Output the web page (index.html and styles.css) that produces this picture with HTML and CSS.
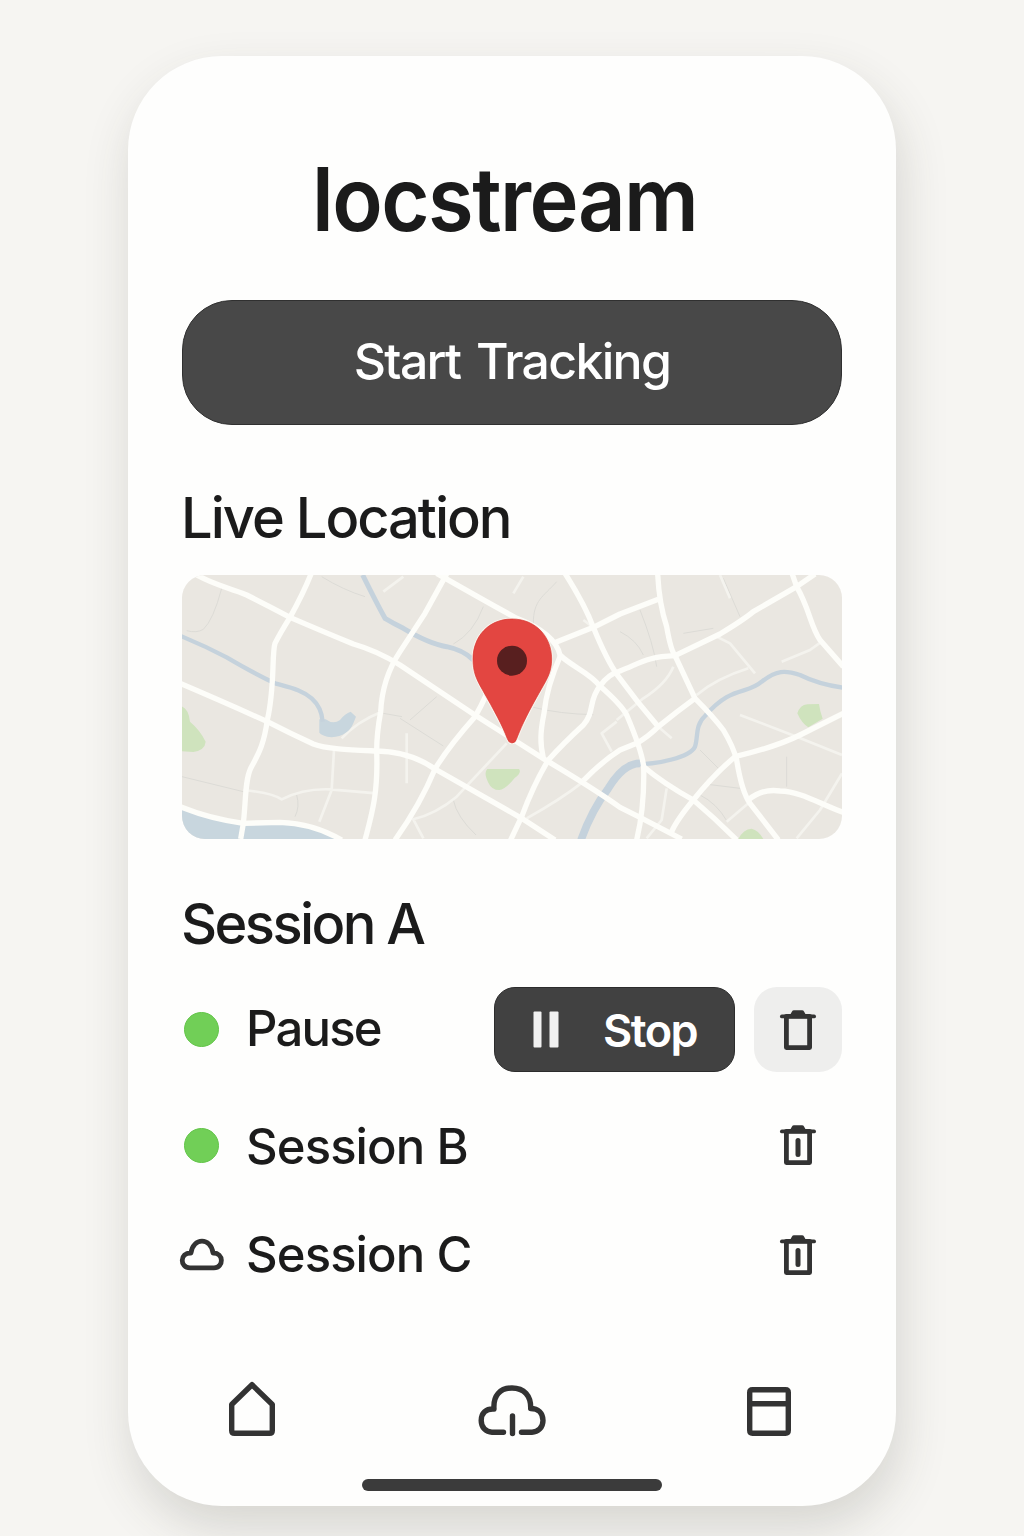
FILE: index.html
```html
<!DOCTYPE html>
<html lang="en">
<head>
<meta charset="utf-8">
<title>locstream</title>
<link rel="stylesheet" href="styles.css">
</head>
<body>
<main class="phone">
  <h1 class="brand"><span>locstream</span></h1>
  <button class="start"><span>Start Tracking</span></button>

  <h2 class="heading live"><span>Live Location</span></h2>
  <div class="map">
    <svg viewBox="6 15 1980 792" preserveAspectRatio="none">
      <g class="park">
        <path d="M0 408 Q25 412 30 455 Q60 480 77 515 Q75 540 40 546 L0 543Z"/>
        <path d="M922 597 H1017 Q1026 608 1004 624 Q975 660 958 660 Q935 660 925 638 Q910 608 922 597Z"/>
        <path d="M1852 430 Q1860 405 1882 403 L1917 402 Q1920 425 1928 446 L1885 472 Q1865 460 1852 430Z"/>
        <path d="M1675 807 Q1690 777 1715 776 Q1735 780 1750 807Z"/>
      </g>
      <g class="lane">
        <path d="M125 55 Q100 150 70 178 Q50 190 20 182M425 20 Q490 60 555 80M6 620 L190 665M350 675 Q360 710 345 740M666 440 L610 430M1130 35 C1090 80 1060 90 1060 160M910 110 Q880 190 820 222M660 445 L790 528M690 450 L770 380M820 690 Q830 740 888 795M1060 412 Q1140 432 1240 434M1380 120 Q1420 220 1430 290M1320 185 Q1370 210 1390 255M1510 190 L1600 175M1630 25 L1680 140M1560 540 L1620 600M1575 642 L1680 655M1560 675 Q1610 700 1640 752M1820 560 V650"/>
      </g>
      <g class="alley">
        <path d="M190 660 Q275 668 305 688 Q370 655 450 658 L590 670M462 540 L455 660 L418 755M485 505 Q530 455 605 425M610 65 L670 20M1030 20 L1000 70M680 490 V640M980 520 L830 680 Q770 730 700 748 L730 805M1040 745 Q1140 690 1210 635M1310 450 L1390 385 Q1460 340 1480 290M1310 455 L1265 490 L1295 545M1435 470 L1475 505M1550 375 Q1610 325 1705 295M1610 200 L1650 220 L1725 310M1620 15 L1650 85M1805 275 L1890 240 L1925 215M1680 435 L1850 500 L1986 555M1986 610 L1920 720 L1850 805M1705 700 L1640 755M1460 655 L1445 750 L1400 805M1210 150 L1240 172"/>
      </g>
      <path class="water-fill" d="M0 715 Q80 745 190 760 L330 760 Q410 775 470 807 L0 807Z"/>
      <path class="water-fill" d="M418 448 L437 448 Q460 465 480 450 Q495 430 512 425 L528 440 L520 460 Q505 498 455 502 Q425 498 418 488Z"/>
      <g class="river">
        <path d="M0 197 Q75 228 140 262 Q225 312 285 340 C340 355 365 360 395 385 Q425 412 428 455"/>
        <path stroke-width="15" d="M548 15 Q590 100 615 145 Q640 160 670 175 C720 205 770 225 800 230 Q850 240 880 270"/>
        <path stroke-width="23" d="M1203 810 Q1235 720 1285 655 Q1330 580 1380 580"/>
        <path stroke-width="13" d="M1345 583 C1440 585 1530 560 1545 530 C1555 500 1545 465 1575 438 C1655 345 1700 375 1745 335 C1790 300 1815 300 1860 315 C1890 330 1930 345 1990 353"/>
      </g>
      <g class="road">
        <path d="M50 15 C110 48 145 52 200 75 Q260 105 330 142 Q430 185 520 222 Q590 242 660 285 L880 432 L1100 572 Q1240 655 1320 712 L1380 742 L1505 807"/>
        <path d="M393 12 Q370 70 330 142 Q300 190 285 220 C275 250 285 350 262 450 C253 515 240 545 212 595 C195 630 198 690 190 760 L182 807"/>
        <path d="M0 340 Q145 402 262 455 Q330 490 400 522 C440 538 520 540 590 543 Q690 545 765 597 L1025 745 L1125 810"/>
        <path d="M0 710 Q90 747 190 760 L300 757 Q400 760 485 810"/>
        <path d="M800 12 L735 130 L660 245 C620 305 605 365 602 425 Q590 490 590 543 C595 670 575 735 555 810"/>
        <path d="M645 810 Q720 705 765 597 Q805 530 885 440 Q920 380 940 320"/>
        <path d="M770 10 Q910 90 1010 145 Q1125 190 1140 255 C1175 290 1225 305 1260 348 Q1325 405 1340 435 Q1385 540 1391 590 Q1394 710 1370 810"/>
        <path d="M1155 10 Q1215 105 1240 172 Q1280 270 1312 315 Q1370 395 1435 470"/>
        <path d="M1120 220 L1240 172 L1320 132 L1437 87"/>
        <path d="M1260 348 Q1285 312 1320 303 C1380 280 1400 260 1485 257 L1620 192 Q1690 150 1720 125 L1850 50 L1905 12"/>
        <path d="M1260 348 C1225 390 1245 425 1210 465 Q1150 520 1105 570 Q1060 645 1025 740 L992 810"/>
        <path d="M1142 255 Q1100 350 1092 430 C1080 490 1080 520 1090 565"/>
        <path d="M1433 10 Q1437 100 1460 170 Q1472 240 1485 257 L1545 385 Q1600 440 1630 480 Q1660 530 1670 570 Q1685 665 1710 700 L1795 810"/>
        <path d="M1210 632 Q1265 575 1320 540 L1370 520 Q1405 500 1435 470 Q1490 425 1545 385"/>
        <path d="M1391 590 Q1450 640 1540 690 Q1605 745 1670 810"/>
        <path d="M1475 785 Q1490 750 1540 690 Q1600 615 1665 560 Q1790 530 1860 495 L1990 430"/>
        <path d="M1705 690 Q1745 655 1800 663 C1865 665 1915 700 1990 727"/>
        <path d="M1836 10 L1850 50 C1890 120 1890 165 1920 210 L1990 290"/>
      </g>
      <path class="pin-halo" d="M996 147 C925 147 879 200 879 267 C879 305 888 326 907 359 C945 426 966 464 982 506 Q986 519 996 519 Q1006 519 1010 506 C1028 460 1045 426 1083 359 C1102 326 1115 305 1115 267 C1115 200 1067 147 996 147Z"/>
      <path class="pin" d="M996 147 C925 147 879 200 879 267 C879 305 888 326 907 359 C945 426 966 464 982 506 Q986 519 996 519 Q1006 519 1010 506 C1028 460 1045 426 1083 359 C1102 326 1115 305 1115 267 C1115 200 1067 147 996 147Z"/>
      <circle class="pin-eye" cx="996" cy="272" r="45"/>
    </svg>
  </div>

  <h2 class="heading session-title"><span>Session A</span></h2>
  <ul class="sessions">
    <li class="row active">
      <span class="status"><i class="dot"></i></span>
      <span class="name pause">Pause</span>
      <button class="stop">
        <svg class="bars" width="26" height="37" viewBox="0 0 26 37"><rect x="0.5" y="0.5" width="8" height="36" rx="1"/><rect x="16.5" y="0.5" width="9" height="36" rx="1"/></svg>
        <span>Stop</span>
      </button>
      <button class="trash boxed">
        <svg class="icon" width="36" height="40" viewBox="0 0 36 40"><path class="solid" d="M10 5 L12 1.5 Q12.500 .2 14 .2 H22 Q23.500 .2 24 1.500 L26 5Z"/><path class="line" d="M1.900 6.400 H34.100"/><path class="body" d="M6.400 6.400 H29.600 V37.600 H6.400Z"/></svg>
      </button>
    </li>
    <li class="row second">
      <span class="status"><i class="dot"></i></span>
      <span class="name">Session B</span>
      <button class="trash">
        <svg class="icon" width="36" height="40" viewBox="0 0 36 40"><path class="solid" d="M10 5 L12 1.5 Q12.500 .2 14 .2 H22 Q23.500 .2 24 1.500 L26 5Z"/><path class="line" d="M1.900 6.400 H34.100"/><path class="body" d="M6.400 6.400 H29.600 V37.600 H6.400Z"/><path class="slot" d="M18 15.500 V29.500"/></svg>
      </button>
    </li>
    <li class="row third">
      <span class="status"><svg class="icon cloud" width="44" height="32" viewBox="0 0 44 32"><path d="M10 28.800 C-0.500 28.800 -0.500 13.500 11 14 C13 -1.800 31 -1.800 33 14 C44 13.500 44 28.800 34 28.800Z"/></svg></span>
      <span class="name">Session C</span>
      <button class="trash">
        <svg class="icon" width="36" height="40" viewBox="0 0 36 40"><path class="solid" d="M10 5 L12 1.5 Q12.500 .2 14 .2 H22 Q23.500 .2 24 1.500 L26 5Z"/><path class="line" d="M1.900 6.400 H34.100"/><path class="body" d="M6.400 6.400 H29.600 V37.600 H6.400Z"/><path class="slot" d="M18 15.500 V29.500"/></svg>
      </button>
    </li>
  </ul>

  <nav class="tabs">
    <svg class="icon" width="46" height="54" viewBox="0 0 46 54"><path d="M23 1.700 L43.300 21.500 V47.500 Q43.300 50.300 40.500 50.300 H5.500 Q2.700 50.300 2.700 47.500 V21.500Z"/></svg>
    <svg class="icon tree" width="68" height="52" viewBox="0 0 68 52"><path d="M25.500 47.200 H14 C8 47.200 3.200 42.500 3.200 35.500 C3.200 28 8 23.500 16 24 C15 10.500 22 3 34 3 C46 3 53 10.500 52.700 23.500 C60 23.500 65 28 65 35.500 C65 42.500 60 47.200 54 47.200 H43.500 M34.500 31 V48.500"/></svg>
    <svg class="icon" width="44" height="50" viewBox="0 0 44 50"><path d="M5.500 4.800 H38.500 Q41.300 4.800 41.300 7.600 V45.300 Q41.300 48.300 38.500 48.300 H5.500 Q2.700 48.300 2.700 45.300 V7.600 Q2.700 4.800 5.500 4.800Z M2.700 18.800 H41.300"/></svg>
  </nav>
  <div class="home-bar"></div>
</main>
</body>
</html>
```
FILE: styles.css
```css
* { box-sizing: border-box; }
body {
  margin: 0;
  height: 1536px;
  padding-top: 56px;
  overflow: hidden;
  background: #f6f5f2;
  color: #1b1b1b;
  font-family: Inter, "Liberation Sans", sans-serif;
}
button { border: 0; padding: 0; font: inherit; background: none; color: inherit; }
svg { display: block; overflow: visible; }
h1, h2, ul { margin: 0; padding: 0; }
.phone {
  width: 768px;
  height: 1450px;
  margin: 0 auto;
  padding: 90px 54px 0;
  border-radius: 94px;
  background: #fefefd;
  box-shadow: 4px 22px 48px rgba(60, 60, 50, .17);
}
.brand {
  font-size: 88px;
  line-height: 106px;
  font-weight: 600;
  letter-spacing: -1.6px;
  padding-left: 130px;
  white-space: nowrap;
}
.brand span { display: inline-block; transform: scaleX(.943); transform-origin: left; }
.start {
  display: flex;
  align-items: center;
  justify-content: center;
  width: 660px;
  height: 125px;
  margin-top: 48px;
  padding-bottom: 4px;
  border-radius: 50px;
  border: 1px solid #303030;
  background: #484848;
  color: #fff;
  font-size: 50px;
  font-weight: 500;
  letter-spacing: -1.7px;
  word-spacing: 4px;
}
.heading {
  font-size: 56px;
  line-height: 60px;
  font-weight: 500;
  letter-spacing: -2px;
  text-indent: -1px;
  white-space: nowrap;
}
.live { margin-top: 63px; }
.map {
  height: 264px;
  margin-top: 27px;
  border-radius: 23px;
  overflow: hidden;
  background: #eae7e1;
}
.map svg { width: 660px; height: 264px; fill: none; overflow: hidden; }
.map .park { fill: #cfe3bd; }
.map .lane { stroke: #dcdbd6; stroke-width: 3; }
.map .alley { stroke: #f4f3ee; stroke-width: 8; stroke-linejoin: round; }
.map .water-fill { fill: #c8d6de; }
.map .river { stroke: #c5d2dc; stroke-width: 13; }
.map .road { stroke: #fdfdf9; stroke-width: 16; stroke-linejoin: round; }
.map .pin-halo { stroke: #fbf5ef; stroke-width: 8; }
.map .pin { fill: #e34641; stroke: #d93832; stroke-width: 2; }
.map .pin-eye { fill: #581f1f; }
.session-title { margin-top: 55px; letter-spacing: -2.6px; }
.sessions { list-style: none; margin-top: 33px; }
.row { display: flex; align-items: center; height: 60px; }
.row.active { height: 85px; }
.row.second { margin-top: 43px; }
.row.third { margin-top: 50px; }
.status { width: 39px; flex: none; display: flex; justify-content: center; }
.dot { width: 35px; height: 35px; border-radius: 50%; background: #71cf57; border: 1px solid #62c548; }
.name {
  flex: 1;
  margin-left: 25px;
  font-size: 49px;
  line-height: 60px;
  font-weight: 500;
  letter-spacing: -.9px;
  white-space: nowrap;
}
.pause { letter-spacing: -1.8px; padding-bottom: 1px; }
.second .name { padding-top: 3px; }
.stop {
  display: flex;
  align-items: center;
  width: 241px;
  height: 85px;
  padding-left: 38px;
  border-radius: 21px;
  border: 1px solid #2c2c2c;
  background: #414141;
  color: #fff;
  font-size: 45px;
  font-weight: 600;
  letter-spacing: -1.5px;
}
.stop span { margin-left: 44px; padding-top: 2px; }
.bars { fill: #f1f1f1; }
.trash {
  width: 88px;
  height: 60px;
  flex: none;
  display: flex;
  align-items: center;
  justify-content: center;
}
.boxed { height: 85px; margin-left: 19px; border-radius: 23px; background: #eeeeed; }
.icon { fill: none; stroke: #333; stroke-width: 5.400; stroke-linejoin: round; stroke-linecap: round; }
.icon .solid { fill: #333; stroke: none; }
.icon .line { stroke-width: 3.800; }
.icon .body { stroke-width: 4.800; }
.icon .slot { stroke-width: 5; }
.icon.cloud { stroke-width: 4.800; flex: none; }
.tabs {
  display: flex;
  align-items: center;
  justify-content: space-between;
  height: 60px;
  margin-top: 95px;
  padding: 0 51px 0 47px;
}
.icon.tree { margin: 2px 0 0 2px; }
.home-bar { width: 300px; height: 12px; margin: 39px auto 0; border-radius: 6px; background: #3b3b3b; }
```
